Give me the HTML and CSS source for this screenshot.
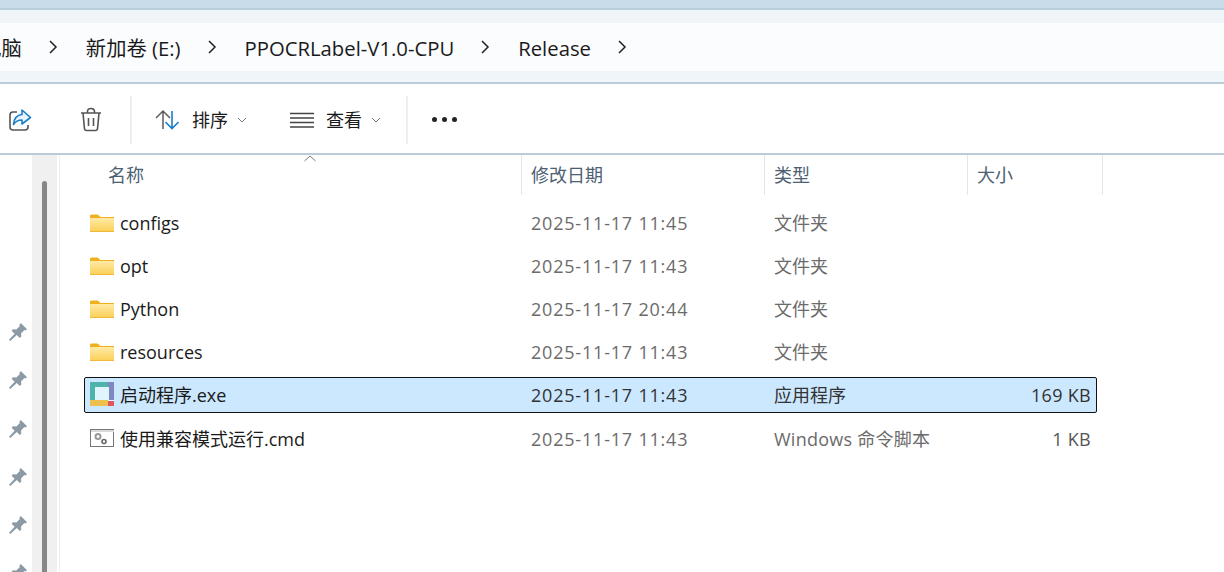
FILE: index.html
```html
<!DOCTYPE html>
<html lang="zh-CN">
<head>
<meta charset="utf-8">
<title>Release</title>
<link rel="stylesheet" href="styles.css">
</head>
<body>
<svg class="defs" width="0" height="0" aria-hidden="true">
  <defs>
    <symbol id="chev" viewBox="0 0 12 16"><path d="M3 2l6 6-6 6" fill="none" stroke="#222" stroke-width="1.5"/></symbol>
    <symbol id="down" viewBox="0 0 10 6"><path d="M1 1l4 4 4-4" fill="none" stroke="#777" stroke-width="1"/></symbol>
    <symbol id="pin" viewBox="0 0 16 16"><path d="M10.500 0l5.500 5.500-1.300 1.200-1-.4-3 3 .2 2.800-1.300 1.300-2.700-2.700L1.200 16 0 14.800l5-5.200-2.700-2.700 1.300-1.300 2.900.2 3-3-.3-1z" fill="#8b9aa5"/></symbol>
    <symbol id="folder" viewBox="0 0 24 18">
      <path d="M0 2a1.500 1.500 0 0 1 1.500-1.500h6l3 2.500H24v3H0z" fill="#efb020"/>
      <rect y="4" width="24" height="14" rx="1" fill="url(#fg)"/>
      <rect y="17" width="24" height="1" fill="#f0b93a"/>
    </symbol>
    <linearGradient id="fg" x1="0" y1="0" x2="0" y2="1"><stop offset="0" stop-color="#ffeaa6"/><stop offset="1" stop-color="#fbcf55"/></linearGradient>
  </defs>
</svg>

<div class="strip"></div>

<nav class="address">
  <span class="crumb first">此电脑</span>
  <svg class="chev"><use href="#chev"/></svg>
  <span class="crumb">新加卷 (E:)</span>
  <svg class="chev"><use href="#chev"/></svg>
  <span class="crumb">PPOCRLabel-V1.0-CPU</span>
  <svg class="chev"><use href="#chev"/></svg>
  <span class="crumb">Release</span>
  <svg class="chev"><use href="#chev"/></svg>
</nav>

<div class="toolbar">
  <svg class="tool share" width="26" height="26" viewBox="0 0 26 26">
    <path d="M10 5H6a3 3 0 0 0-3 3v12a3 3 0 0 0 3 3h12a3 3 0 0 0 3-3v-2" fill="none" stroke="#555" stroke-width="1.600"/>
    <path d="M15 3l8.500 7.500L15 17v-4c-4 0-6.500 1.500-8.500 4.500C7 11 10 8 15 7.500z" fill="#e8f3fb" stroke="#1a7fc8" stroke-width="1.600" stroke-linejoin="round"/>
  </svg>
  <svg class="tool trash" width="24" height="26" viewBox="0 0 24 26">
    <path d="M2 6h20M8.500 6V4.500a3.500 3 0 0 1 7 0V6M4 6l1.500 16a2 2 0 0 0 2 1.500h9a2 2 0 0 0 2-1.500L20 6M9.500 11v8M14.500 11v8" fill="none" stroke="#555" stroke-width="1.600"/>
  </svg>
  <span class="sep first-sep"></span>
  <button class="tbtn sort">
    <svg width="26" height="22" viewBox="0 0 26 22">
      <path d="M8 20V3M1 9l7-7 7 7" fill="none" stroke="#5c5c5c" stroke-width="1.500"/>
      <path d="M17 2v17M10.500 13l6.500 6.500 6.500-6.500" fill="none" stroke="#1a7fc8" stroke-width="1.600"/>
    </svg>
    <span class="tlabel">排序</span>
    <svg class="caret" width="10" height="6"><use href="#down"/></svg>
  </button>
  <button class="tbtn view">
    <svg width="26" height="16" viewBox="0 0 26 16">
      <path d="M1 1.500h24M1 6h24M1 10.500h24M1 15h24" fill="none" stroke="#444" stroke-width="1.400"/>
    </svg>
    <span class="tlabel">查看</span>
    <svg class="caret" width="10" height="6"><use href="#down"/></svg>
  </button>
  <span class="sep second-sep"></span>
  <div class="more"><i></i><i></i><i></i></div>
</div>

<main class="main">
  <aside class="nav">
    <div class="nav-list">
      <hr class="nav-rule">
      <svg class="pin"><use href="#pin"/></svg>
      <svg class="pin"><use href="#pin"/></svg>
      <svg class="pin"><use href="#pin"/></svg>
      <svg class="pin"><use href="#pin"/></svg>
      <svg class="pin"><use href="#pin"/></svg>
      <svg class="pin"><use href="#pin"/></svg>
    </div>
    <div class="track"><div class="thumb"></div></div>
  </aside>

  <section class="files">
    <div class="head">
      <span class="hname">名称</span>
      <span class="hcell">修改日期</span>
      <span class="hcell">类型</span>
      <span class="hcell last">大小</span>
      <svg class="sort-arrow" width="12" height="7" viewBox="0 0 12 7"><path d="M.5 6L6 1l5.500 5" fill="none" stroke="#777" stroke-width="1"/></svg>
    </div>

    <div class="rows">
      <div class="row">
        <span class="name"><svg class="ficon"><use href="#folder"/></svg>configs</span>
        <span class="meta date">2025-11-17 11:45</span><span class="meta cjk">文件夹</span><span class="size"></span>
      </div>
      <div class="row">
        <span class="name"><svg class="ficon"><use href="#folder"/></svg>opt</span>
        <span class="meta date">2025-11-17 11:43</span><span class="meta cjk">文件夹</span><span class="size"></span>
      </div>
      <div class="row">
        <span class="name"><svg class="ficon"><use href="#folder"/></svg>Python</span>
        <span class="meta date">2025-11-17 20:44</span><span class="meta cjk">文件夹</span><span class="size"></span>
      </div>
      <div class="row">
        <span class="name"><svg class="ficon"><use href="#folder"/></svg>resources</span>
        <span class="meta date">2025-11-17 11:43</span><span class="meta cjk">文件夹</span><span class="size"></span>
      </div>
      <div class="row selected">
        <span class="name cjk">
          <svg class="ficon exe" viewBox="0 0 24 24">
            <rect width="24" height="24" fill="#dff4fb"/>
            <path d="M0 0h18v5H5v13H0z" fill="#4fb3ac"/>
            <path d="M18 0h6v18h-5V5h-1z" fill="#7d87c4"/>
            <path d="M0 18h18v6H0z" fill="#f0c04e"/>
            <path d="M18 19h6v5h-6z" fill="#e2555f"/>
          </svg>启动程序.exe</span>
        <span class="meta date dark">2025-11-17 11:43</span><span class="meta dark cjk">应用程序</span><span class="size">169 KB</span>
      </div>
      <div class="row last-row">
        <span class="name cjk">
          <svg class="ficon cmd" viewBox="0 0 24 18">
            <rect x=".5" y=".5" width="23" height="17" fill="#fff" stroke="#777"/>
            <path d="M1 1h23v2H1z" fill="#d9d9d9"/>
            <circle cx="8" cy="7.500" r="2.500" fill="none" stroke="#999" stroke-width="2"/>
            <circle cx="14" cy="12.500" r="2" fill="none" stroke="#666" stroke-width="1.600"/>
          </svg>使用兼容模式运行.cmd</span>
        <span class="meta date">2025-11-17 11:43</span><span class="meta cjk wide">Windows 命令脚本</span><span class="size">1 KB</span>
      </div>
    </div>
  </section>
</main>
</body>
</html>
```

FILE: styles.css
```css
* { box-sizing: border-box; }
html, body { margin: 0; height: 100%; overflow: hidden; }
body {
  width: 1224px;
  height: 572px;
  display: flex;
  flex-direction: column;
  background: #fff;
  color: #1a1a1a;
  font-family: "Open Sans", "Noto Sans CJK SC", sans-serif;
  font-size: 18px;
}
.defs { display: block; height: 0; }

.strip {
  height: 10px;
  flex: none;
  background: #c9dce9;
  border-bottom: 2px solid #b9cedd;
}

.address {
  height: 74px;
  flex: none;
  display: flex;
  align-items: center;
  padding: 13px 0 11px;
  background: linear-gradient(#f0f5f9 0 13px, #fafcfe 13px 61px, #f0f5f9 61px);
  border-bottom: 2px solid #bccbd8;
  white-space: nowrap;
  overflow: hidden;
  font-size: 20.3px;
}
.crumb { line-height: 48px; padding-top: 2px; }
.crumb.first { margin-left: -39px; }
.chev { width: 12px; height: 16px; flex: none; margin: 0 27px 0 25px; }

.toolbar {
  height: 71px;
  flex: none;
  display: flex;
  align-items: center;
  border-bottom: 2px solid #bccbd8;
  padding: 2px 0 0 7px;
}
.tool { flex: none; }
.trash { margin-left: 46px; }
.sep { width: 2px; height: 48px; background: #eeeeee; flex: none; }
.first-sep { margin-left: 27px; }
.second-sep { margin-left: 25px; }
.tbtn {
  display: flex;
  align-items: center;
  border: 0;
  padding: 0;
  background: none;
  font: inherit;
  font-size: 18px;
  color: #1a1a1a;
}
.sort { margin-left: 23px; }
.view { margin-left: 42px; }
.tlabel { margin: 0 0 2px 11px; }
.caret { margin-left: 9px; }
.more { display: flex; gap: 5px; margin-left: 24px; }
.more i { width: 5px; height: 5px; border-radius: 50%; background: #222; }

.main { flex: 1; display: flex; min-height: 0; }
.nav { width: 60px; flex: none; display: flex; overflow: hidden; }
.nav-list {
  width: 32px;
  flex: none;
  display: flex;
  flex-direction: column;
  align-items: flex-start;
}
.nav-rule {
  width: 20px;
  height: 2px;
  margin: 128px 0 0;
  border: 0;
  background: #dddddd;
}
.pin { width: 18px; height: 18px; flex: none; margin: 40px 0 0 9px; }
.pin + .pin { margin-top: 30.300px; }
.track {
  width: 25px;
  flex: none;
  background: #f0f0f0;
  padding: 26px 0 0 10px;
  margin-right: 3px;
  box-shadow: 2px 0 0 #fff, 3px 0 0 #efefef;
}
.thumb { width: 5px; height: 100%; background: #878787; border-radius: 3px 3px 0 0; }

.files { flex: 1; min-width: 0; }
.head {
  position: relative;
  display: grid;
  grid-template-columns: 461px 243px 203px 136px;
  height: 40px;
}
.hname { padding-left: 48px; line-height: 40px; color: #4c6072; font-size: 18px; }
.hcell {
  padding-left: 9px;
  line-height: 40px;
  color: #4c6072;
  font-size: 18px;
  border-left: 1px solid #e5e5e5;
}
.hcell.last { border-right: 1px solid #e5e5e5; }
.sort-arrow { position: absolute; left: 244px; top: 0; }

.rows { display: flex; flex-direction: column; gap: 7px; padding: 10px 0 0 24px; }
.row {
  width: 1013px;
  height: 36px;
  display: grid;
  grid-template-columns: 446px 243px 192px 130px;
  align-items: center;
  border: 1px solid transparent;
  border-radius: 2px;
}
.row.selected { background: #cce8ff; border-color: #111; }
.row.last-row { margin-top: 1px; }
.name { display: flex; align-items: center; white-space: nowrap; padding-left: 5px; color: #1a1a1a; }
.cjk { margin-bottom: 2px; }
.ficon { width: 24px; height: 18px; flex: none; margin-right: 6px; }
.ficon.exe { height: 24px; }
.meta { color: #6b6b6b; white-space: nowrap; }
.meta.date { letter-spacing: 0.8px; }
.meta.wide { letter-spacing: 0.25px; }
.meta.dark { color: #333; }
.size { text-align: right; padding-right: 5px; letter-spacing: 0.3px; color: #555; white-space: nowrap; }
.selected .size { color: #333; }
```
